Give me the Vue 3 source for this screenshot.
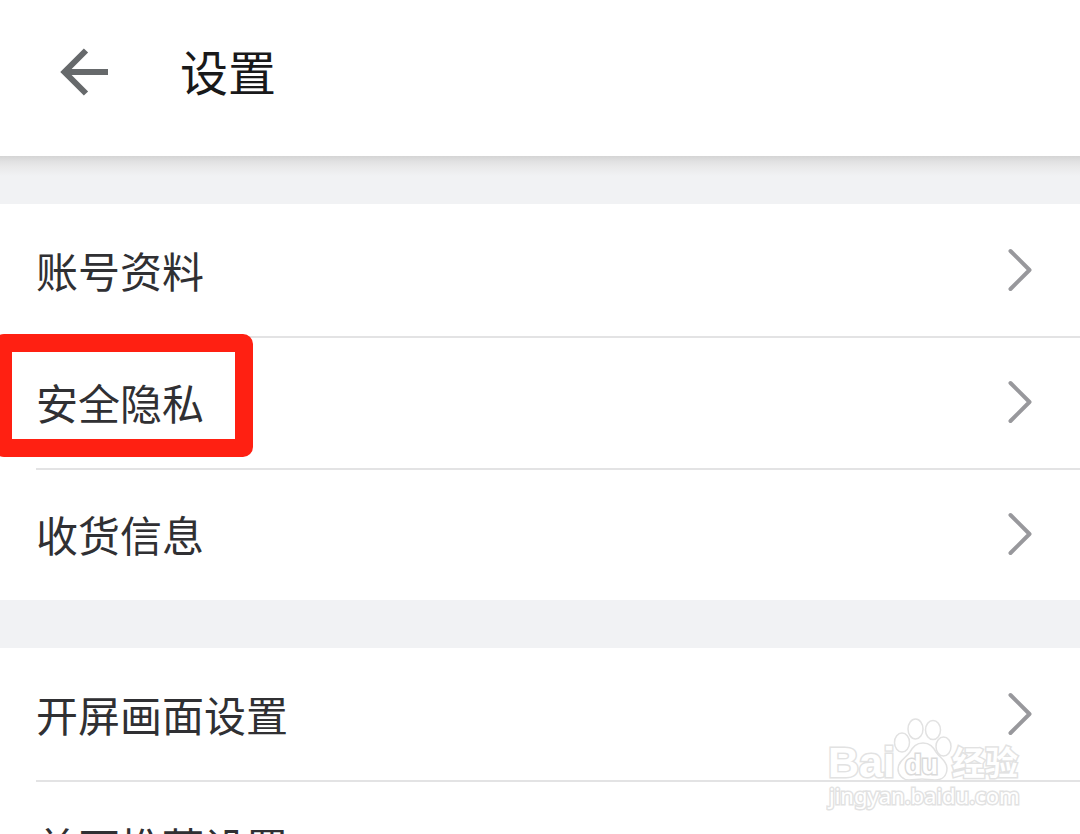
<script setup>
const groups = [
  [
    { label: '账号资料', chevron: true },
    { label: '安全隐私', chevron: true, marked: true },
    { label: '收货信息', chevron: true },
  ],
  [{ label: '开屏画面设置', chevron: true }, { label: '首页推荐设置' }],
]
</script>

<template>
  <div class="page">
    <header class="bar">
      <button class="back" type="button" aria-label="返回">
        <svg width="48" height="48" viewBox="0 0 48 48" fill="none" stroke="#66696b" stroke-width="6">
          <path d="M26 2.500 4.500 24 26 45.500M4 24h44" />
        </svg>
      </button>
      <h1>设置</h1>
    </header>
    <main>
      <ul v-for="(group, i) in groups" :key="i" class="group">
        <li v-for="item in group" :key="item.label" class="item">
          <button class="row" type="button">
            <span class="label">{{ item.label }}</span>
            <svg v-if="item.chevron" width="24" height="44" viewBox="0 0 24 44" fill="none" stroke="#98989c" stroke-width="4" stroke-linecap="round" stroke-linejoin="round">
              <path d="M2.500 3 21.500 22 2.500 41" />
            </svg>
          </button>
          <span v-if="item.marked" class="mark"></span>
        </li>
      </ul>
    </main>
    <svg class="watermark" width="200" height="100" viewBox="0 0 200 100" fill="#fff" stroke="#e2e2e2" stroke-width="1.500">
      <text x="2" y="64" font-size="43" class="latin">Bai</text>
      <ellipse cx="76" cy="29.500" rx="7.500" ry="9.500" />
      <ellipse cx="89.500" cy="16" rx="7.500" ry="10" />
      <ellipse cx="107" cy="17" rx="7.500" ry="9.500" />
      <ellipse cx="117.500" cy="33.500" rx="7.500" ry="9.500" />
      <path d="M97 30c-7 0-10 4-13 9-4 6-12 9-12 17 0 6 5 11 11 11 5 0 8-1 13-1s8 1 13 1c7 0 12-4 12-12 0-7-7-10-11-16-3-5-6-9-13-9Z" />
      <text x="79" y="61" font-size="27" class="latin du">du</text>
      <text x="126" y="62" font-size="33" class="cjk">经验</text>
      <text x="3" y="91" font-size="22" class="site">jingyan.baidu.com</text>
    </svg>
  </div>
</template>

<style>
body {
  margin: 0;
}
</style>

<style scoped>
.page {
  position: relative;
  height: 100vh;
  overflow: hidden;
  background: #f1f2f4;
  font-family: "Noto Sans CJK SC", "Noto Sans", sans-serif;
}
.bar {
  position: relative;
  display: flex;
  align-items: center;
  gap: 72px;
  height: 156px;
  padding: 0 60px 12px;
  box-sizing: border-box;
  background: #fff;
}
.bar::after {
  content: "";
  position: absolute;
  top: 100%;
  left: 0;
  right: 0;
  height: 20px;
  background: linear-gradient(#d4d4d4, #e0e0e1 25%, #e9e9ea 55%, #f1f2f4);
}
button {
  border: 0;
  padding: 0;
  background: none;
  font: inherit;
  cursor: pointer;
}
svg {
  display: block;
}
h1 {
  margin: 0;
  padding-bottom: 4px;
  font-size: 48px;
  line-height: 72px;
  font-weight: 400;
  color: #19191a;
}
.group {
  list-style: none;
  margin: 48px 0 0;
  padding: 0;
  background: #fff;
}
.item {
  position: relative;
  padding-left: 36px;
}
.row {
  display: flex;
  align-items: center;
  justify-content: space-between;
  width: 100%;
  height: 132px;
  padding-right: 48px;
  box-sizing: border-box;
  color: #303033;
}
.item + .item .row {
  border-top: 2px solid #e3e3e4;
  padding-bottom: 2px;
}
.label {
  font-size: 42px;
  line-height: 60px;
}
.mark {
  position: absolute;
  top: -2px;
  left: -6px;
  width: 259px;
  height: 123px;
  box-sizing: border-box;
  border: 18px solid #ff2012;
  border-radius: 10px;
  pointer-events: none;
}
.watermark {
  position: absolute;
  right: 54px;
  bottom: 21px;
  pointer-events: none;
}
.watermark text {
  paint-order: stroke;
  stroke-width: 3;
}
.watermark .du {
  stroke: #dadada;
}
.latin {
  font-family: "Liberation Sans", sans-serif;
  font-weight: 700;
}
.cjk {
  font-weight: 700;
}
.site {
  font-family: "Noto Sans", sans-serif;
}
</style>
